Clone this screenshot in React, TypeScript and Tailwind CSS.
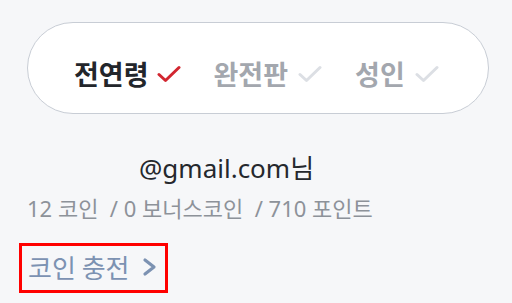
import React from "react";

const Check = ({ color }: { color: string }) => (
  <svg width="24" height="18" viewBox="0 0 24 18" fill="none">
    <path d="M2 9.5 L8.5 15.5 L22 2.5" stroke={color} strokeWidth="3" strokeLinecap="round" strokeLinejoin="round" />
  </svg>
);

const latin = { fontFamily: '"Noto Sans", "Noto Sans CJK KR", sans-serif' };

export default function App() {
  return (
    <div
      className="w-[512px] h-[303px] bg-[#f6f7f9] overflow-hidden"
      style={{ fontFamily: '"Noto Sans CJK KR", "Noto Sans", sans-serif' }}
    >
      <div className="pt-[22px] pl-[27px] pr-[23px]">
        <div className="h-[92px] rounded-full border border-[#c8cdd5] bg-white flex items-center pl-[46px] pt-[10px]">
          <div className="flex items-center">
            <span className="text-[27px] leading-none font-bold text-[#23262b]">전연령</span>
            <span className="ml-[8px] mt-[2px]"><Check color="#d22630" /></span>
          </div>
          <div className="flex items-center ml-[33px]">
            <span className="text-[27px] leading-none font-bold text-[#a3a7ae]">완전판</span>
            <span className="ml-[10px] mt-[2px]"><Check color="#dcdfe4" /></span>
          </div>
          <div className="flex items-center ml-[33px]">
            <span className="text-[27px] leading-none font-bold text-[#a3a7ae]">성인</span>
            <span className="ml-[10px] mt-[2px]"><Check color="#dcdfe4" /></span>
          </div>
        </div>
      </div>
      <div className="pl-[139px] mt-[41px] text-[26px] leading-none text-[#25282d]" style={latin}>@gmail.com님</div>
      <div className="pl-[27px] mt-[16px] text-[22px] leading-none text-[#8d9299] whitespace-pre" style={latin}>12 코인  / 0 보너스코인  / 710 포인트</div>
      <div className="ml-[19px] mt-[24px] w-[149px] h-[50px] border-[3px] border-[#ff0000] flex items-center pl-[6px] pb-[2px]">
        <span className="text-[26px] leading-none text-[#7c92b2]">코인 충전</span>
        <svg className="ml-[12px]" width="15" height="20" viewBox="0 0 15 20" fill="none">
          <path d="M3 3 L12 10 L3 17" stroke="#7c92b2" strokeWidth="3.2" strokeLinecap="round" strokeLinejoin="round" />
        </svg>
      </div>
    </div>
  );
}
